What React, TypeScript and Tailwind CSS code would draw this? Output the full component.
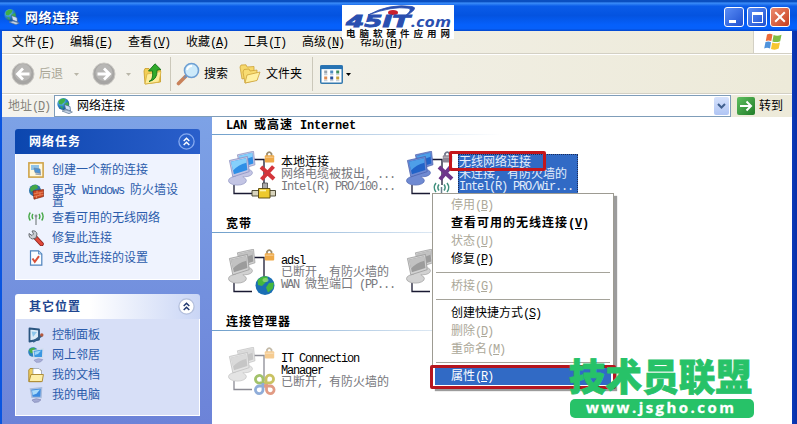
import React from "react";

const CJK = "font-['Liberation_Sans','Noto_Sans_CJK_SC',sans-serif]";

/** Mixed text: Latin runs are set on a half-width grid next to full-width Han glyphs. */
function T({ children, bold = false }: { children: string; bold?: boolean }) {
  const parts = children.split(/([\x20-\x7e]+)/).filter(Boolean);
  return (
    <span className={bold ? "font-bold tracking-[1px] whitespace-pre" : "whitespace-pre"}>
      {parts.map((p, i) =>
        /^[\x20-\x7e]/.test(p) ? (
          <span
            key={i}
            className={
              bold
                ? "font-['Liberation_Mono',monospace] text-[12px] tracking-[-0.2px]"
                : "font-['Liberation_Mono',monospace] text-[12px] tracking-[-1.2px]"
            }
          >
            {p}
          </span>
        ) : (
          <span key={i}>{p}</span>
        ),
      )}
    </span>
  );
}

function Accel({ label, k, bold }: { label: string; k: string; bold?: boolean }) {
  return (
    <span className="whitespace-nowrap">
      <T bold={bold}>{label}</T>
      <T bold={bold}>(</T>
      <span className="underline underline-offset-1 decoration-1">
        <T bold={bold}>{k}</T>
      </span>
      <T bold={bold}>)</T>
    </span>
  );
}

function GlobeIcon({ className }: { className: string }) {
  return (
    <svg viewBox="0 0 16 16" className={className}>
      <defs>
        <radialGradient id="globeFill" cx="0.35" cy="0.3" r="0.8">
          <stop offset="0" stopColor="#8fd8f0" />
          <stop offset="0.5" stopColor="#2a86c8" />
          <stop offset="1" stopColor="#164a80" />
        </radialGradient>
      </defs>
      <circle cx="6.3" cy="6" r="6" fill="url(#globeFill)" />
      <path d="M1.5 3 Q5 -0.5 8.5 1 L7.5 4 L4.5 6.5 L2 6Z M7 6 L11 4 L12 8 L8.5 9Z M3 8 L5.5 8.5 L5.5 11.5Z" fill="#3fae48" />
      <path d="M7.5 6.5 L13 8.5 L13.5 13 L8.5 11Z" fill="#cfe0f5" stroke="#3f608f" strokeWidth="0.7" />
      <path d="M5 13 L9 12 L15.4 14 L12 15.7Z" fill="#c3d2e4" stroke="#536b88" strokeWidth="0.6" />
    </svg>
  );
}

function NavCircle({ flip = false }: { flip?: boolean }) {
  return (
    <svg viewBox="0 0 24 24" className="h-6 w-6 shrink-0">
      <circle cx="12" cy="12" r="11" fill="#a6a5a3" stroke="#cbc9c4" strokeWidth="1" />
      <circle cx="12" cy="10.5" r="8.5" fill="#b8b7b5" />
      <path
        d={flip ? "M5.5 12H17M12 6.5 17.5 12 12 17.5" : "M18.5 12H7M12 6.5 6.5 12 12 17.5"}
        fill="none"
        stroke="#fff"
        strokeWidth="2.8"
      />
    </svg>
  );
}

function UpFolder() {
  return (
    <svg viewBox="0 0 20 22" className="h-[22px] w-5 shrink-0">
      <path d="M1 8 L2 5.5 H6 L7.5 7.5 L17.5 6.5 V19 L2 21Z" fill="#f2ce56" stroke="#c79a25" strokeWidth="0.8" />
      <path d="M4 11 L18 8.5 L16 19 L2 21Z" fill="#fdec9a" stroke="#d5ae3a" strokeWidth="0.7" />
      <path d="M6 18.5 Q10.5 17 9.5 8 H5.5 L12 0.8 L17.8 6.5 L14 7.2 Q14.5 17 6 18.5Z" fill="#31aa2b" stroke="#14731a" strokeWidth="0.9" />
    </svg>
  );
}

function SearchIcon() {
  return (
    <svg viewBox="0 0 24 24" className="h-6 w-6 shrink-0">
      <path d="M10 14 L2.5 21.5" stroke="#c9825a" strokeWidth="3.6" strokeLinecap="round" />
      <path d="M11 13 L8 16" stroke="#7a8fae" strokeWidth="2" />
      <circle cx="15.5" cy="8.5" r="7" fill="#cdeafa" stroke="#6d9fd3" strokeWidth="1.6" />
      <path d="M11 8 Q12 4 16 4" stroke="#fff" strokeWidth="2" fill="none" />
    </svg>
  );
}

function FoldersIcon() {
  return (
    <svg viewBox="0 0 22 20" className="h-5 w-[22px] shrink-0">
      <path d="M1 3 L2 1 L7 0.8 L8 3 L15 2.5 V12 L3 15Z" fill="#f6d86c" stroke="#cda238" strokeWidth="0.8" />
      <path d="M4 8 L5 5.5 L10 5 L11 7 L18 6 V16 L6 19Z" fill="#f8dc72" stroke="#cda238" strokeWidth="0.8" />
      <path d="M8 11 L21 8 L18 16.5 L6 19Z" fill="#fff0a2" stroke="#cda238" strokeWidth="0.8" />
    </svg>
  );
}

function ViewsIcon() {
  const dots = ["#9aa3ad", "#4e8cc0", "#3f9060", "#e08b52", "#28509c", "#c6a23e"];
  return (
    <svg viewBox="0 0 23 19" className="h-[19px] w-[23px] shrink-0">
      <rect x="0.75" y="0.75" width="21.5" height="17.5" rx="1" fill="#fff" stroke="#3479ae" strokeWidth="1.5" />
      <rect x="0.5" y="0.5" width="22" height="3.6" fill="#2673b4" />
      {dots.map((c, i) => (
        <g key={c}>
          <rect x={4.2 + (i % 3) * 6} y={5.5 + Math.floor(i / 3) * 6} width="3" height="3" fill={c} />
          <path d={`M${4 + (i % 3) * 6} ${9.7 + Math.floor(i / 3) * 6}h3.4`} stroke="#a9b5c2" strokeWidth="0.8" />
        </g>
      ))}
    </svg>
  );
}

function WindowsFlag() {
  return (
    <svg viewBox="0 0 20 18" className="h-[18px] w-5">
      <path d="M4 1.5 Q7 0 9.5 1.6 L8.3 8 Q5.5 6.8 2.8 8Z" fill="#ec6b3a" />
      <path d="M10.6 2 Q14 3.6 18.5 1.8 L17.2 8.2 Q13 9.8 9.4 8.4Z" fill="#80bd45" />
      <path d="M2.5 9 Q5.5 7.8 8 9.2 L7 15.4 Q4 14 1.2 15.4Z" fill="#4f93dc" />
      <path d="M9.2 9.6 Q12.5 11 17 9.4 L15.7 15.6 Q12 17.6 8 15.9Z" fill="#f7c62f" />
    </svg>
  );
}

function Caret({ dark = false }: { dark?: boolean }) {
  return (
    <svg viewBox="0 0 5 3" className="h-[3px] w-[5px] shrink-0">
      <path d="M0 0H5L2.5 3Z" fill={dark ? "#000" : "#b9b6a8"} />
    </svg>
  );
}

function Wifi({ className }: { className: string }) {
  return (
    <svg viewBox="0 0 16 14" className={className}>
      <g fill="none" stroke="#46a847" strokeWidth="1.4">
        <path d="M2.3 1.5Q-0.5 5.5 2.3 9.5M5 3Q3.2 5.5 5 8M13.7 1.5Q16.5 5.5 13.7 9.5M11 3Q12.8 5.5 11 8" />
      </g>
      <path d="M8 5V14" stroke="#8c9296" strokeWidth="1.4" />
      <circle cx="8" cy="5" r="1.4" fill="#8c9296" />
    </svg>
  );
}

const sideIcons: Record<string, React.ReactNode> = {
  create: (
    <svg viewBox="0 0 16 16" className="h-4 w-4">
      <rect x="0.9" y="0.9" width="14.2" height="14.2" fill="#fff8dd" stroke="#cfa44a" strokeWidth="1.6" />
      <path d="M3 3H11V8H3Z" fill="#8fc3e9" />
      <path d="M6 6 L12 7 L12.5 11.5 L7 10.5Z" fill="#4d93d4" stroke="#6c7f99" strokeWidth="0.6" />
      <path d="M7.5 12 L13 12.5" stroke="#9aa4b3" strokeWidth="1.5" />
    </svg>
  ),
  firewall: (
    <svg viewBox="0 0 16 16" className="h-4 w-4">
      <circle cx="7" cy="6.5" r="6" fill="#2d75a8" />
      <path d="M2 4Q5 0 9 1L10 4L6 6L3 8Z" fill="#45a845" />
      <path d="M5 7 L15.5 5.5 V12.5 L6 15.2Z" fill="#cf4a24" stroke="#7c2714" strokeWidth="0.7" />
      <path d="M5.3 10 L15.5 8M5.6 12.6 L15.5 10.4M9 6.5V9M12 8.6V11M8.5 12V14.4" stroke="#f1a67d" strokeWidth="0.6" />
    </svg>
  ),
  wifi: <Wifi className="h-[14px] w-4" />,
  repair: (
    <svg viewBox="0 0 16 16" className="h-4 w-4">
      <path d="M7 7 L13.5 14" stroke="#8c221c" strokeWidth="4.6" strokeLinecap="round" />
      <path d="M7.5 7.5 L13.5 14" stroke="#e0493a" strokeWidth="3" strokeLinecap="round" />
      <path d="M1 3.5 L4 5.5 L5.5 4 L4 1 Q8 0 9 4 L8 8 L4.5 9 Q0.5 8 1 3.5Z" fill="#c9cdd2" stroke="#5e6267" strokeWidth="0.9" />
    </svg>
  ),
  settings: (
    <svg viewBox="0 0 16 16" className="h-4 w-4">
      <path d="M2.5 0.8H10.5L13.8 4V15.2H2.5Z" fill="#fbfdff" stroke="#4f83bd" strokeWidth="1.2" />
      <path d="M10.5 1V4H13.5" fill="#bcd6ef" stroke="#4f83bd" strokeWidth="0.8" />
      <path d="M4.5 8.5 L6.8 11.8 L11 6.2" fill="none" stroke="#d84f36" strokeWidth="2" />
    </svg>
  ),
  panel: (
    <svg viewBox="0 0 16 16" className="h-4 w-4">
      <path d="M1.5 1.5 L11 2.5 V12.5 L1.5 14.5Z" fill="#dcecf8" stroke="#2a5580" strokeWidth="1.8" strokeLinejoin="round" />
      <path d="M3.6 4.5 L9 5 L5 10Z" fill="#8cc6ea" />
      <path d="M5 14.8 L14 8.4" stroke="#33608a" strokeWidth="2.2" />
      <circle cx="13.8" cy="8" r="1.7" fill="#b4593f" />
    </svg>
  ),
  places: (
    <svg viewBox="0 0 16 16" className="h-4 w-4">
      <circle cx="5" cy="5" r="4.8" fill="#2c83bb" />
      <path d="M0.8 3Q4 0 7 1L6 5L3 6.5Z" fill="#47af47" />
      <path d="M5 3.5 L15 2 L14.5 10.5 L6 10.5Z" fill="#3b97e2" stroke="#d0dcec" strokeWidth="1.2" />
      <path d="M6.5 4.8 L13.2 3.6 L10 7 L6.8 8Z" fill="#9bd6f8" />
      <path d="M6 13.2 Q10 10.5 14.8 12.5 Q13 16 8 15.2Z" fill="#a9afd8" stroke="#8087b4" strokeWidth="0.5" />
    </svg>
  ),
  docs: (
    <svg viewBox="0 0 16 16" className="h-4 w-4">
      <path d="M0.8 3 L2 1.5H6L7 3H13V14.6H0.8Z" fill="#f0cf63" stroke="#a8842a" strokeWidth="0.9" />
      <path d="M5 1.5H11L13.5 4V12.5H5Z" fill="#fff" stroke="#8f9dac" strokeWidth="0.7" />
      <path d="M3 7.5H15.4L14.2 14.6H1Z" fill="#fdeea8" stroke="#a8842a" strokeWidth="0.9" />
    </svg>
  ),
  computer: (
    <svg viewBox="0 0 16 16" className="h-4 w-4">
      <path d="M2.5 2 L13.5 0.8 L13 10.5 L4 10.3Z" fill="#3a8ae0" stroke="#a9bcdc" strokeWidth="1.5" />
      <path d="M4 3.5 L12 2.6 L8.5 6.8 L4.7 8Z" fill="#a9daf9" />
      <path d="M4 13 Q8 10.5 13 12.8 Q11 16 6 15.3Z" fill="#a3aad4" stroke="#7c83b0" strokeWidth="0.6" />
    </svg>
  ),
};

function TaskRow({ icon, text, tall = false }: { icon: string; text: string; tall?: boolean }) {
  return (
    <div className={tall ? "flex h-7 items-start gap-2 pt-1" : "flex h-5 items-center gap-2"}>
      <span className="flex h-4 w-4 shrink-0 items-center justify-center">{sideIcons[icon]}</span>
      <span className="text-[12px] leading-[12px] whitespace-pre-line text-[#2b5cab]">
        {text.split("\n").map((l) => (
          <span key={l} className="block h-3">
            <T>{l}</T>
          </span>
        ))}
      </span>
    </div>
  );
}

function Chevrons({ primary = false }: { primary?: boolean }) {
  return (
    <svg viewBox="0 0 17 17" className="h-[17px] w-[17px]">
      <circle cx="8.5" cy="8.5" r="7.6" fill={primary ? "#2a62cc" : "#fff"} stroke={primary ? "#86aaf0" : "#b3bfdc"} strokeWidth="1.3" />
      <path d="M5.7 8 8.5 5.3 11.3 8M5.7 12 8.5 9.3 11.3 12" fill="none" stroke={primary ? "#fff" : "#20386f"} strokeWidth="1.5" />
    </svg>
  );
}

type Tone = "blue" | "selected" | "gray" | "faint";
type Badge = "lan" | "wifi" | "globe" | "manager" | "none";

function ConnIcon({ tone, badge }: { tone: Tone; badge: Badge }) {
  const [deep, light, frame, edge] = {
    blue: ["#2f8fe6", "#86d0fb", "#c3c5e4", "#8a90c0"],
    selected: ["#2163c8", "#4e9fe8", "#6f8ad2", "#4a62ae"],
    gray: ["#9c9c9c", "#c2c2c2", "#d2d2d2", "#9a9a9a"],
    faint: ["#c6c6c6", "#dadada", "#e4e4e4", "#c0c0c0"],
  }[tone];
  const wire = tone === "faint" ? "#8c8c95" : "#191932";
  const monitor = (x: number, y: number, s: number) => (
    <g transform={`translate(${x} ${y}) scale(${s})`}>
      <ellipse cx="7.5" cy="22" rx="8" ry="4" fill={frame} stroke={edge} strokeWidth="0.6" />
      <path d="M6 16 L12 15 L12.5 21 H6Z" fill={frame} />
      <path d="M0.4 4 L16.5 0.4 L18 14 L3.4 18.6Z" fill={frame} stroke={edge} strokeWidth="0.7" />
      <path d="M1.8 5.2 L15.2 2 L16.4 12.6 L4.4 16.4Z" fill={deep} />
      <path d="M1.8 5.2 L15.2 2 L15.6 6 Q8 8 3.6 13Z" fill={light} />
    </g>
  );
  return (
    <svg viewBox="0 0 48 48" className="h-12 w-12 shrink-0">
      <path d="M26 8.5H36V34M6 34V42.5H24" fill="none" stroke={wire} strokeWidth="1.3" />
      {monitor(9, -0.2, 1)}
      {monitor(1, 5, 1.12)}
      <g opacity={tone === "faint" ? 0.6 : 1}>
        <path d="M39 5V2.8Q41.2 -0.5 43.5 2.8V5" fill="none" stroke={tone === "selected" ? "#72778c" : "#9c8c6c"} strokeWidth="1.8" />
        <rect x="36.8" y="4.3" width="9.4" height="7.2" rx="1" fill={tone === "selected" ? "#8e8896" : "#efaa48"} />
        <path d="M37.5 6.2H45.5" stroke="#fff" strokeOpacity="0.45" />
      </g>
      {badge === "lan" && (
        <g>
          <path d="M33 16 L46 28M45.5 15.5 L33.5 28.5" stroke="#d3353b" strokeWidth="4" />
          <path d="M34.5 32H39.5V40H34.5Z" fill="#a9a9a9" stroke="#333" strokeWidth="0.7" />
          <path d="M24 39.5H47.5V45H24Z" fill="#d8d4bd" stroke="#403c28" strokeWidth="0.9" />
          <path d="M30.5 37.5H42V47H30.5Z" fill="#edc92e" stroke="#53430c" strokeWidth="0.9" />
          <path d="M32 39.5H38" stroke="#fdf3b0" strokeWidth="1.6" />
        </g>
      )}
      {badge === "wifi" && (
        <g>
          <path d="M33 16 L46 28M45 15.5 L34 28.5" stroke="#6f358b" strokeWidth="4" />
          <g fill="none" stroke="#3f8f7c" strokeWidth="1.5">
            <path d="M30 32Q26.5 36.5 30 41M33 33.5Q30.7 36.5 33 39.5M41 32Q44.5 36.5 41 41M38 33.5Q40.3 36.5 38 39.5" />
          </g>
          <path d="M35.5 36V42" stroke="#68808c" strokeWidth="1.5" />
        </g>
      )}
      {badge === "globe" && (
        <g>
          <circle cx="37" cy="36.5" r="9.5" fill="#1b6fb4" />
          <path d="M29.5 31 Q35 25.5 40 28 L38 33 L34 37 L30 36Z M41 34 L46 33.5 L45 39.5 L40 43.5 L38 38.5Z" fill="#45b83d" />
          <ellipse cx="37.5" cy="31" rx="3" ry="2" fill="#9fe07a" opacity="0.7" />
        </g>
      )}
      {badge === "manager" && (
        <g fill="none" strokeWidth="2.8">
          <path d="M36.5 36H32A3.8 3.8 0 1 1 35 31.5V37" stroke="#a2c26a" />
          <path d="M38 37V31.5A3.8 3.8 0 1 1 42 35.8H36" stroke="#c9c262" />
          <path d="M35 36V42.5A3.8 3.8 0 1 1 31.5 39H37" stroke="#8fadd9" />
          <path d="M36 39H42A3.8 3.8 0 1 1 38.5 42.5V37" stroke="#e19b84" />
        </g>
      )}
    </svg>
  );
}

function Tile({ tone, badge, lines, titleLines = 1, selected = false }: {
  tone: Tone;
  badge: Badge;
  lines: string[];
  titleLines?: number;
  selected?: boolean;
}) {
  return (
    <div className="flex w-[178px] items-start gap-[5px]">
      <ConnIcon tone={tone} badge={badge} />
      <div
        className={
          selected
            ? "-ml-px mt-[3px] h-10 w-[120px] shrink-0 border border-dotted border-[#1b2c58] bg-[#316ac5] pt-px text-[12px] text-[#e4eefb]"
            : "mt-[5px] shrink-0 text-[12px] text-[#77777c]"
        }
      >
        {lines.map((l, i) => (
          <div key={i} className={!selected && i < titleLines ? "h-3 leading-[12px] text-black" : "h-3 leading-[12px]"}>
            <T>{l}</T>
          </div>
        ))}
      </div>
    </div>
  );
}

function Group({ title, children }: { title: string; children: React.ReactNode }) {
  return (
    <section className="h-[98px]">
      <div className="flex h-[17px] items-center pl-[14px] text-[12px] leading-none text-black">
        <T bold>{title}</T>
      </div>
      <div className="h-px w-full bg-linear-to-r from-[#6f9fcb] to-white to-50%" />
      <div className="flex pt-4 pl-4">{children}</div>
    </section>
  );
}

function MenuItem({ label, k, off = false, bold = false, hot = false }: { label: string; k: string; off?: boolean; bold?: boolean; hot?: boolean }) {
  const tone = hot ? "bg-[#316ac5] text-white" : off ? "text-[#aca899]" : "text-black";
  return (
    <div className={`flex h-[18px] items-center pl-4 text-[12px] leading-none ${tone}`}>
      <Accel label={label} k={k} bold={bold} />
    </div>
  );
}

function Sep() {
  return (
    <div className="flex h-[9px] items-center px-px">
      <div className="h-px w-full bg-[#a5a39a]" />
    </div>
  );
}

function SidePanel({ title, primary = false, children }: { title: string; primary?: boolean; children: React.ReactNode }) {
  return (
    <section className="w-[185px]">
      <header
        className={
          primary
            ? "flex h-[25px] items-center justify-between rounded-t-[3px] bg-linear-to-r from-[#0b46ae] to-[#2a5fcb] pr-[5px] pl-[14px] text-white"
            : "flex h-[25px] items-center justify-between rounded-t-[3px] bg-linear-to-r from-white from-40% to-[#c9d5f5] pr-[5px] pl-[14px] text-[#20458f]"
        }
      >
        <span className="text-[12px] leading-none">
          <T bold>{title}</T>
        </span>
        <Chevrons primary={primary} />
      </header>
      <div
        className={
          primary
            ? "h-[126px] border border-t-0 border-white bg-[#eff3fe] pt-[6px] pl-3"
            : "h-[97px] border border-t-0 border-white bg-[#d7dff7] pt-[6px] pl-3"
        }
      >
        {children}
      </div>
    </section>
  );
}

export default function App() {
  const menus: [string, string][] = [
    ["文件", "F"],
    ["编辑", "E"],
    ["查看", "V"],
    ["收藏", "A"],
    ["工具", "T"],
    ["高级", "N"],
    ["帮助", "H"],
  ];
  return (
    <div className={`relative flex h-[424px] w-[797px] flex-col overflow-hidden bg-linear-to-r from-[#0a55e0] from-98% to-[#0a2fa8] ${CJK}`}>
      <div className="flex h-[31px] shrink-0 items-center bg-[linear-gradient(180deg,#0a4fc0_0%,#0a4fc0_5%,#3a8cf8_10%,#0a5ce8_20%,#0453e0_50%,#0560fb_80%,#0660fa_92%,#0346cc_100%)] pt-[3px] pr-[7px] pl-1">
        <GlobeIcon className="h-4 w-4" />
        <span className="ml-[5px] text-[13px] leading-none font-bold tracking-[0.6px] text-white [text-shadow:1px_1px_0_#0b2f86]">网络连接</span>
        <div className="ml-auto flex gap-[3px]">
          <div className="flex h-5 w-5 rounded-[3px] border border-white bg-linear-to-br from-[#5b8df5] to-[#1e4fd0] pt-[12px] pl-1">
            <div className="h-[3px] w-[7px] bg-white" />
          </div>
          <div className="flex h-5 w-5 items-center justify-center rounded-[3px] border border-white bg-linear-to-br from-[#5b8df5] to-[#1e4fd0]">
            <div className="h-[11px] w-[11px] border border-t-[3px] border-white" />
          </div>
          <div className="flex h-5 w-5 items-center justify-center rounded-[3px] border border-white bg-linear-to-br from-[#ec8a6c] to-[#c63c1c]">
            <svg viewBox="0 0 12 12" className="h-3 w-3">
              <path d="M1.2 1.2 10.8 10.8M10.8 1.2 1.2 10.8" stroke="#fff" strokeWidth="2" />
            </svg>
          </div>
        </div>
      </div>

      <div className="mr-[5px] ml-[2px] flex min-h-0 flex-1 flex-col bg-linear-to-r from-[#f4f3ee] to-[#edead9]">
        <nav className="flex h-[23px] shrink-0 border-b border-[#d3d0c4]">
          <div className="flex flex-1 items-center pl-[10px] text-[12px] leading-none text-black">
            {menus.map(([l, k]) => (
              <span key={l} className="w-[58px] shrink-0">
                <Accel label={l} k={k} />
              </span>
            ))}
          </div>
          <div className="flex w-[39px] items-center justify-center border-l border-[#d3d0c4] bg-white">
            <WindowsFlag />
          </div>
        </nav>

        <div className="flex h-10 shrink-0 items-center border-t border-b border-t-white border-b-[#d3d0c4] pl-[9px] text-[12px] leading-none text-black">
          <NavCircle />
          <span className="ml-[4px] text-[#a9a696]">后退</span>
          <div className="ml-[11px]"><Caret /></div>
          <div className="ml-[13px]"><NavCircle flip /></div>
          <div className="ml-[10px]"><Caret /></div>
          <div className="ml-[12px]"><UpFolder /></div>
          <div className="ml-[7px] h-[34px] w-px bg-[#cbc8ba]" />
          <div className="ml-[5px]"><SearchIcon /></div>
          <span className="ml-[4px]">搜索</span>
          <div className="ml-[11px]"><FoldersIcon /></div>
          <span className="ml-[5px]">文件夹</span>
          <div className="ml-[10px] h-[34px] w-px bg-[#cbc8ba]" />
          <div className="ml-[7px]"><ViewsIcon /></div>
          <div className="ml-[3px]"><Caret dark /></div>
        </div>

        <div className="flex h-[23px] shrink-0 items-center border-t border-white pl-[6px] text-[12px] leading-none text-[#85837a]">
          <span className="w-[46px] shrink-0"><Accel label="地址" k="D" /></span>
          <div className="flex h-[22px] w-[677px] items-center border border-[#7f9db9] bg-white pr-px pl-[2px] text-black">
            <GlobeIcon className="h-4 w-4" />
            <span className="ml-1">网络连接</span>
            <div className="ml-auto flex h-[18px] w-[15px] items-center justify-center rounded-[2px] bg-linear-to-b from-[#d6e2fc] to-[#b0c5f4]">
              <svg viewBox="0 0 9 6" className="h-[6px] w-[9px]">
                <path d="M1 1 4.5 4.5 8 1" fill="none" stroke="#41608f" strokeWidth="2" />
              </svg>
            </div>
          </div>
          <div className="ml-[6px] flex h-[18px] w-[18px] items-center justify-center rounded-[2px] bg-linear-to-br from-[#5fc060] to-[#1f7d27]">
            <svg viewBox="0 0 14 14" className="h-[14px] w-[14px]">
              <path d="M1 7H12M7.5 2.5 12 7 7.5 11.5" fill="none" stroke="#fff" strokeWidth="2" />
            </svg>
          </div>
          <span className="ml-[4px] text-black">转到</span>
        </div>

        <div className="flex min-h-0 flex-1">
          <aside className="flex w-[210px] shrink-0 flex-col gap-[14px] bg-linear-to-b from-[#7da2e6] to-[#6c83d8] pt-3 pl-[13px]">
            <SidePanel title="网络任务" primary>
              <TaskRow icon="create" text="创建一个新的连接" />
              <TaskRow icon="firewall" text={"更改 Windows 防火墙设\n置"} tall />
              <TaskRow icon="wifi" text="查看可用的无线网络" />
              <TaskRow icon="repair" text="修复此连接" />
              <TaskRow icon="settings" text="更改此连接的设置" />
            </SidePanel>
            <SidePanel title="其它位置">
              <TaskRow icon="panel" text="控制面板" />
              <TaskRow icon="places" text="网上邻居" />
              <TaskRow icon="docs" text="我的文档" />
              <TaskRow icon="computer" text="我的电脑" />
            </SidePanel>
          </aside>

          <main className="min-w-0 flex-1 bg-white">
            <Group title="LAN 或高速 Internet">
              <Tile tone="blue" badge="lan" lines={["本地连接", "网络电缆被拔出, ...", "Intel(R) PRO/100..."]} />
              <Tile tone="selected" badge="wifi" selected lines={["无线网络连接", "未连接, 有防火墙的", "Intel(R) PRO/Wir..."]} />
            </Group>
            <Group title="宽带">
              <Tile tone="gray" badge="globe" lines={["adsl", "已断开, 有防火墙的", "WAN 微型端口 (PP..."]} />
              <Tile tone="gray" badge="none" lines={[]} />
            </Group>
            <Group title="连接管理器">
              <Tile tone="faint" badge="manager" titleLines={2} lines={["IT Connection", "Manager", "已断开, 有防火墙的"]} />
            </Group>
          </main>
        </div>
      </div>

      {/* Context menu of the selected connection */}
      <div className="absolute top-[193px] left-[432px] w-[182px] border border-[#9d9b92] bg-white p-[2px] shadow-[3px_3px_1px_rgba(90,90,90,0.6)]">
        <MenuItem label="停用" k="B" off />
        <MenuItem label="查看可用的无线连接" k="V" bold />
        <MenuItem label="状态" k="U" off />
        <MenuItem label="修复" k="P" />
        <Sep />
        <MenuItem label="桥接" k="G" off />
        <Sep />
        <MenuItem label="创建快捷方式" k="S" />
        <MenuItem label="删除" k="D" off />
        <MenuItem label="重命名" k="M" off />
        <Sep />
        <MenuItem label="属性" k="R" hot />
      </div>

      {/* Highlight frames */}
      <div className="absolute top-[151px] left-[449px] h-5 w-[97px] rounded-[2px] border-[3px] border-[#c4161c]" />
      <div className="absolute top-[365px] left-[430px] h-6 w-[186px] rounded-[2px] border-[3px] border-[#b5161f] shadow-[inset_0_-1px_0_#fff]" />

      {/* Site badge */}
      <div className="absolute top-[5px] left-[342px] h-[34px] w-[112px] bg-white">
        <svg viewBox="0 0 112 34" className="h-full w-full">
          <path d="M26 10 Q48 -2 70 1.5 Q78 3 62 12 Q72 4 66 3.2 Q50 1 26 10Z" fill="#2a4fb0" stroke="#2a4fb0" strokeWidth="0.8" />
          <ellipse cx="51" cy="7.5" rx="5" ry="2.6" fill="#c8202c" />
          <g fill="#2a4fb0" fontStyle="italic" fontWeight="700">
            <text x="4" y="22" fontSize="15" textLength="64" lengthAdjust="spacingAndGlyphs" fontFamily="DejaVu Sans" stroke="#2a4fb0" strokeWidth="0.8">45IT</text>
            <text x="69" y="22" fontSize="15" textLength="40" lengthAdjust="spacingAndGlyphs" fontFamily="Open Sans">.com</text>
          </g>
          <text x="4" y="32" fontSize="9.5" fontWeight="700" textLength="104" fill="#111" fontFamily="Noto Sans CJK SC">电脑软硬件应用网</text>
        </svg>
      </div>

      {/* Watermark */}
      <svg viewBox="0 0 190 64" className="absolute top-[356px] left-[568px] h-16 w-[190px] overflow-visible">
        <text x="1" y="34.5" fontSize="37" fontWeight="900" textLength="183" lengthAdjust="spacingAndGlyphs" fill="#27c268" stroke="#27c268" strokeWidth="0.8" fontFamily="Noto Sans CJK SC">技术员联盟</text>
        <rect x="2" y="43" width="184" height="19" rx="5" fill="#27c268" />
        <text x="18" y="57" fontSize="15" fontWeight="700" textLength="148" fill="#fff" stroke="#fff" strokeWidth="0.3" fontFamily="Open Sans">www.jsgho.com</text>
      </svg>
    </div>
  );
}
